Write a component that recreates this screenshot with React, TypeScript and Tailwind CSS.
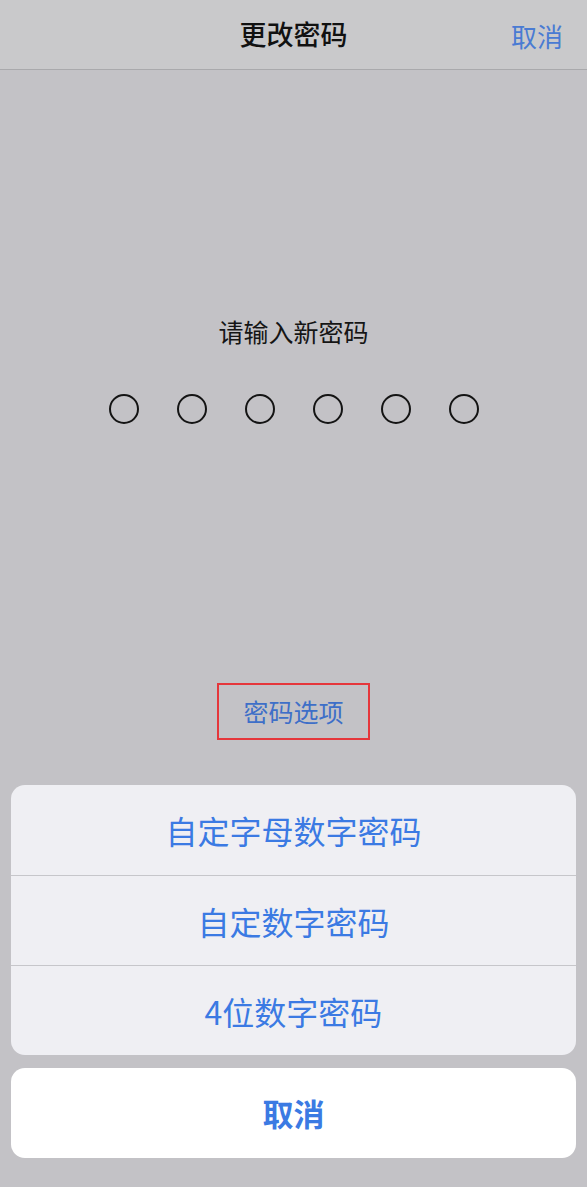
const FONT = '"Noto Sans CJK SC", "Noto Sans", sans-serif';

const OPTIONS = ['自定字母数字密码', '自定数字密码', '4位数字密码'];

export default function App() {
  return (
    <div
      className="flex min-h-[1187px] w-full flex-col bg-[#c3c2c6]"
      style={{ fontFamily: FONT }}
    >
      {/* Nav bar */}
      <header className="relative flex h-[70px] shrink-0 items-center justify-center border-b border-[#a9a9ac] bg-[#c9c9cb]">
        <h1 className="text-[27px] font-medium text-[#111]">更改密码</h1>
        <button className="absolute right-[24px] top-1/2 -translate-y-1/2 text-[26px] text-[#4a7bd3]">
          取消
        </button>
      </header>

      {/* Passcode entry */}
      <main className="flex flex-1 flex-col items-center">
        <p className="mt-[246px] text-[25px] leading-[30px] text-[#151515]">请输入新密码</p>
        <div className="mt-[48px] flex gap-[38px]">
          {Array.from({ length: 6 }).map((_, i) => (
            <span key={i} className="h-[30px] w-[30px] rounded-full border-2 border-[#141414]" />
          ))}
        </div>

        <div className="mt-[259px] flex h-[57px] w-[153px] items-center justify-center border-2 border-[#e5363b]">
          <span className="text-[25px] text-[#3e6fc8]">密码选项</span>
        </div>

        {/* Action sheet */}
        <div className="mt-[45px] w-full px-[11px]">
          <div className="overflow-hidden rounded-[14px] bg-[#efeff3]">
            {OPTIONS.map((o, i) => (
              <div
                key={o}
                className={`flex h-[90px] items-center justify-center text-[32px] text-[#3b7ae3] ${
                  i > 0 ? 'border-t border-[#c6c6ca]' : ''
                }`}
              >
                {o}
              </div>
            ))}
          </div>
          <div className="mt-[13px] flex h-[90px] items-center justify-center rounded-[14px] bg-white text-[31px] font-bold text-[#3b7ae3]">
            取消
          </div>
        </div>
      </main>
    </div>
  );
}
